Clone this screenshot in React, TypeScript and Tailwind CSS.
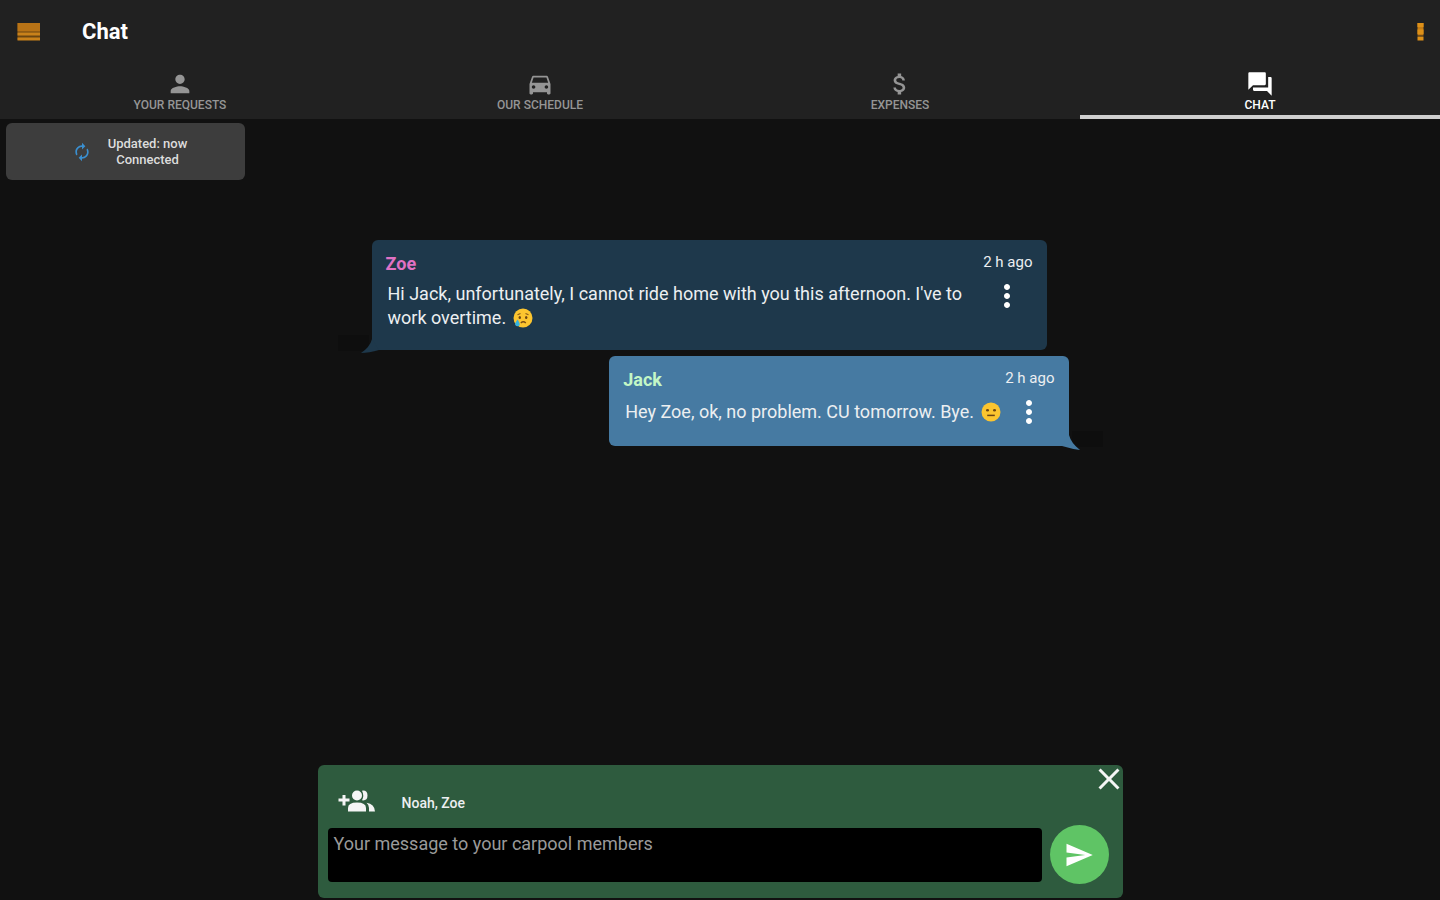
import { useState } from "react";
import type { ReactNode } from "react";
import {
  MdAttachMoney,
  MdAutorenew,
  MdClose,
  MdDirectionsCar,
  MdForum,
  MdMoreVert,
  MdPerson,
  MdSend,
} from "react-icons/md";
import clsx from "clsx";

const tabs = [
  { id: "requests", label: "Your requests", icon: MdPerson },
  { id: "schedule", label: "Our schedule", icon: MdDirectionsCar },
  { id: "expenses", label: "Expenses", icon: MdAttachMoney },
  { id: "chat", label: "Chat", icon: MdForum },
];

function SadFace() {
  return (
    <svg viewBox="0 0 20 20" className="inline-block w-5 h-5 ml-0.5 align-text-bottom" role="img" aria-label="Crying face">
      <circle cx="10" cy="10" r="9.5" fill="#fcc52f" />
      <path d="M4.5 6.8 L7.5 5.6 M12.5 5.6 L15.5 6.8" stroke="#8a5a16" strokeWidth="1.1" fill="none" />
      <ellipse cx="6.8" cy="9.4" rx="1.2" ry="1.5" fill="#6b4413" />
      <ellipse cx="13.2" cy="9.4" rx="1.2" ry="1.5" fill="#6b4413" />
      <path d="M7.8 15 Q10.3 12.6 12.8 15" stroke="#7a4d14" strokeWidth="1.3" fill="none" />
      <path d="M4.6 11.5 Q1.6 15 2.2 17 Q4.4 19.6 6.6 17.2 Q7.2 15 4.6 11.5 Z" fill="#35b4e0" />
    </svg>
  );
}

function NeutralFace() {
  return (
    <svg viewBox="0 0 20 20" className="inline-block w-5 h-5 ml-0.5 align-text-bottom" role="img" aria-label="Neutral face">
      <circle cx="10" cy="10" r="9.5" fill="#fcc52f" />
      <ellipse cx="6.5" cy="8.2" rx="1.5" ry="1.2" fill="#6b4413" />
      <ellipse cx="13.5" cy="8.2" rx="1.5" ry="1.2" fill="#6b4413" />
      <path d="M6.2 13.4 H13.8" stroke="#6b4413" strokeWidth="1.5" />
    </svg>
  );
}

function AddGroupIcon() {
  return (
    <svg viewBox="0 0 38 24" className="w-[38px] h-6" fill="currentColor" aria-hidden="true">
      <path d="M4.5 6 H7.5 V9.5 H11.5 V12.5 H7.5 V16.5 H4.5 V12.5 H0.5 V9.5 H4.5 Z" />
      <circle cx="19" cy="6.5" r="5" />
      <path d="M10 22.5 V19 Q10 13.5 19 13.5 Q28 13.5 28 19 V22.5 Z" />
      <path d="M24 1.7 Q29.5 1 29.5 6.5 Q29.5 12 24 11.3 Q26.5 6.5 24 1.7 Z" />
      <path d="M28.5 13.8 Q36.5 15 37 22.5 H31 V19 Q31 16 28.5 13.8 Z" />
    </svg>
  );
}

type MessageProps = {
  author: string;
  time: string;
  mine?: boolean;
  children: ReactNode;
};

function Message({ author, time, mine, children }: MessageProps) {
  return (
    <article
      className={clsx(
        "relative w-fit max-w-[675px] rounded-md px-3.5 pt-3 pb-5",
        mine ? "self-end bg-[#467aa2]" : "self-start bg-[#1e384b]"
      )}
    >
      <header className="flex items-start justify-between">
        <h2 className={clsx("text-lg leading-6 font-bold", mine ? "text-[#c3f7c6]" : "text-[#e071c4]")}>
          {author}
        </h2>
        <time className="text-[15px] leading-5 text-[#eceff1]">{time}</time>
      </header>
      <div className="flex items-start mt-1.5 pl-0.5">
        <p className="flex-1 self-center text-lg leading-6 text-[#eceff1]">{children}</p>
        <button type="button" aria-label="Message options" className="ml-2.5 mr-2 -my-1 text-white">
          <MdMoreVert className="w-9 h-9" />
        </button>
      </div>
      {mine ? (
        <svg viewBox="0 0 36 20" className="absolute -right-9 -bottom-1 w-9 h-5 overflow-visible" aria-hidden="true">
          <path d="M3 1 H34 V17 H3 Z" fill="#0e0e0e" />
          <path d="M0 5 Q2 13 11 20 Q3 19 -7 16 Z" fill="#467aa2" />
        </svg>
      ) : (
        <svg viewBox="0 0 36 20" className="absolute -left-9 -bottom-1 w-9 h-5 overflow-visible" aria-hidden="true">
          <path d="M2 1 H33 V17 H2 Z" fill="#0e0e0e" />
          <path d="M36 5 Q34 13 25 19 Q33 19 43 16 Z" fill="#1e384b" />
        </svg>
      )}
    </article>
  );
}

function Composer({ onClose }: { onClose: () => void }) {
  const [text, setText] = useState("");

  return (
    <form
      onSubmit={(e) => e.preventDefault()}
      className="w-full max-w-[805px] mx-auto mb-0.5 rounded-md bg-[#2e5b3e] pb-3.5"
    >
      <div className="flex items-start h-[60px] pl-5">
        <button type="button" aria-label="Add recipients" className="mt-6 text-[#f5f5f5]">
          <AddGroupIcon />
        </button>
        <span className="flex-1 mt-7 ml-6.5 text-sm leading-5 font-medium text-[#eceff1]">Noah, Zoe</span>
        <button type="button" aria-label="Close" onClick={onClose} className="-mt-1 -mr-1 text-[#f5f5f5]">
          <MdClose className="w-9 h-9" />
        </button>
      </div>
      <div className="flex items-center gap-2 pl-2.5 pr-3.5">
        <textarea
          aria-label="Message"
          value={text}
          onChange={(e) => setText(e.target.value)}
          placeholder="Your message to your carpool members"
          className="flex-1 h-[54px] px-1.5 py-1 rounded-sm bg-black text-lg leading-6 text-white placeholder:text-[#9a9a9a] resize-none outline-none"
        />
        <button
          type="submit"
          aria-label="Send"
          className="flex items-center justify-center w-[59px] h-[59px] rounded-full bg-[#5fc465] text-white"
        >
          <MdSend className="w-[30px] h-[30px]" />
        </button>
      </div>
    </form>
  );
}

export default function App() {
  const [active, setActive] = useState("chat");
  const [composing, setComposing] = useState(true);

  return (
    <div className="min-h-screen flex flex-col bg-[#111111] font-['Roboto',sans-serif]">
      <header className="bg-[#212121]">
        <div className="flex items-center h-16 pl-4 pr-2">
          <button type="button" aria-label="Open menu">
            <svg viewBox="0 0 24 20" className="w-6 h-5">
              <rect x="1.5" y="1" width="23" height="17" fill="#6b4510" />
              <path d="M1.5 1 H24 V9.5 H1.5 Z" fill="#b87316" />
              <path d="M1.5 10.5 H24 V13.5 H1.5 Z M1.5 15.5 H24 V18.5 H1.5 Z" fill="#c9811a" />
            </svg>
          </button>
          <h1 className="flex-1 ml-10.5 text-[22px] leading-7 font-bold text-white">Chat</h1>
          <button type="button" aria-label="More options">
            <svg viewBox="0 0 24 20" className="w-6 h-5">
              <rect x="9.5" y="1" width="6" height="12.5" fill="#c47c14" />
              <path d="M9.5 1 H15.5 V5 H9.5 Z M9.5 7.5 H15.5 V12 H9.5 Z M9.5 14.5 H15.5 V18.5 H9.5 Z" fill="#dd9018" />
            </svg>
          </button>
        </div>
        <nav className="grid grid-cols-4">
          {tabs.map(({ id, label, icon: Icon }) => (
            <button
              key={id}
              type="button"
              onClick={() => setActive(id)}
              className={clsx(
                "flex flex-col items-center h-[55px] pt-1.5 border-b-4",
                active === id ? "border-[#cfcfcf] text-white" : "border-transparent text-[#959595]"
              )}
            >
              <Icon className="w-7 h-7" />
              <span className="text-xs leading-3.5 font-medium uppercase">{label}</span>
            </button>
          ))}
        </nav>
      </header>

      <main className="flex-1 flex flex-col">
        <div className="flex items-center justify-center gap-4 w-[239px] h-[57px] ml-1.5 mt-1 pl-2 rounded-md bg-[#3d3d3d]">
          <MdAutorenew className="w-5 h-5 text-[#3a8fd0]" />
          <p className="text-[13px] leading-4 font-medium text-center text-[#dcdcdc]">
            Updated: now
            <br />
            Connected
          </p>
        </div>

        <section aria-label="Messages" className="flex-1 flex flex-col gap-1.5 w-full max-w-[805px] mx-auto px-[54px] pt-[60px]">
          <Message author="Zoe" time="2 h ago">
            Hi Jack, unfortunately, I cannot ride home with you this afternoon. I've to work overtime. <SadFace />
          </Message>
          <Message author="Jack" time="2 h ago" mine>
            Hey Zoe, ok, no problem. CU tomorrow. Bye. <NeutralFace />
          </Message>
        </section>

        {composing && <Composer onClose={() => setComposing(false)} />}
      </main>
    </div>
  );
}
